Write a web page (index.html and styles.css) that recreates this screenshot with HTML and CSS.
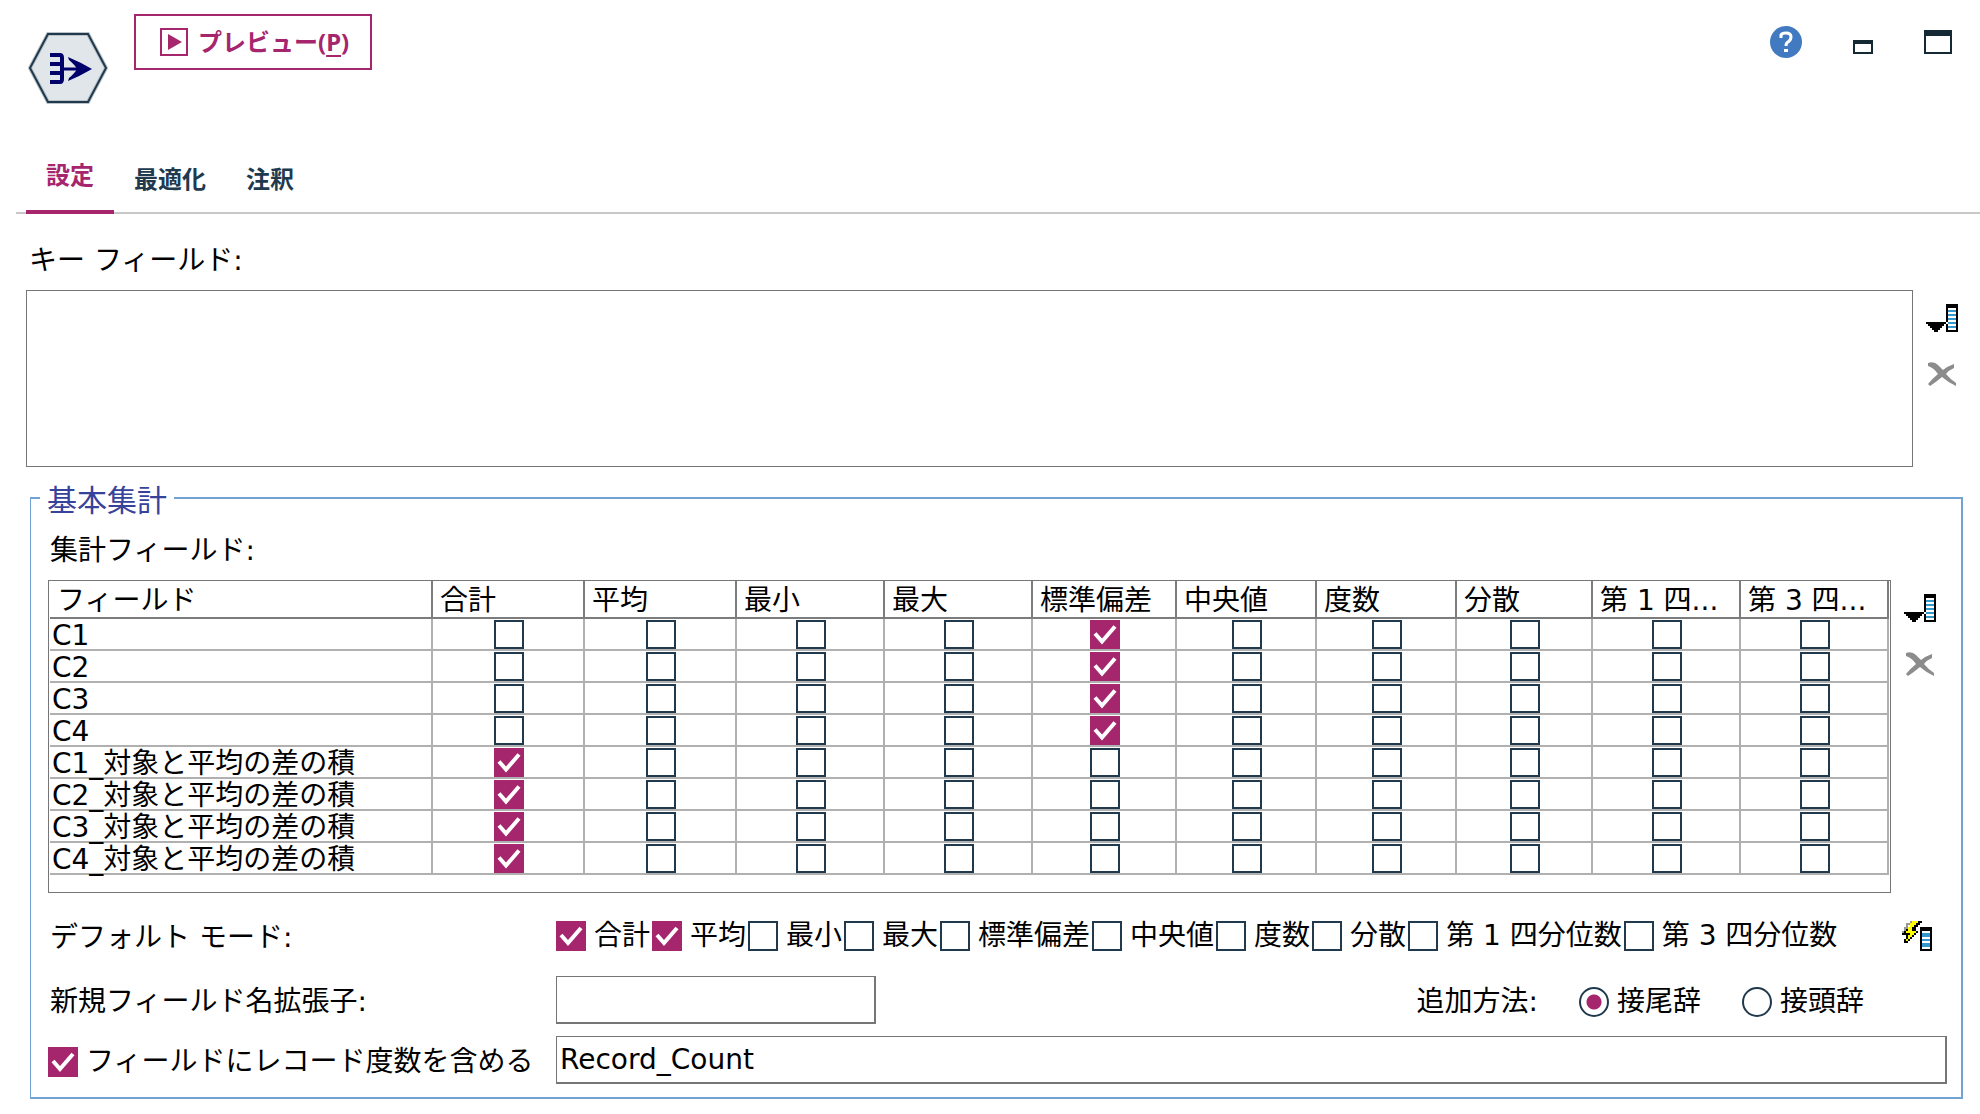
FILE: index.html
```html
<!DOCTYPE html>
<html lang="ja">
<head>
<meta charset="utf-8">
<title>レコード集計</title>
<link rel="stylesheet" href="styles.css">
</head>
<body>
<svg class="defs" aria-hidden="true">
  <symbol id="fields" viewBox="0 0 32 28" shape-rendering="crispEdges">
    <path fill="#000" d="M0 18h20v2h-2v2h-2v2h-2v2h-2v2H8v-2H6v-2H4v-2H2v-2H0zM20 0h12v28H20z"/>
    <path fill="#fff" d="M22 4h8v22h-8zM20 18h2v2h-2z"/>
    <path fill="#3399cc" d="M22 6h8v2h-8zM22 10h8v2h-8zM22 14h8v2h-8zM22 18h8v2h-8zM22 22h8v2h-8z"/>
  </symbol>
  <symbol id="cross" viewBox="0 0 28 24">
    <path fill="#8c8c8c" d="M0 1Q6-1 10 3L15 8Q20 4 26 2V6Q21 8 18 12Q23 18 28 21V24Q21 21 14 15Q8 20 2 24L0 22Q5 16 10 12Q6 6 0 4z"/>
  </symbol>
</svg>
<header class="toolbar">
  <svg class="node" width="80" height="72" viewBox="0 0 80 72">
    <path d="M20 2H60L78 36L60 70H20L2 36Z" fill="#e1e6ea" stroke="#b9c3c9" stroke-width="4"/>
    <path d="M20 2H60L78 36L60 70H20L2 36Z" fill="none" stroke="#20394d" stroke-width="2"/>
    <path d="M22 23H32Q34 23 34 26V47Q34 50 32 50H22M22 32H34M22 41H34" fill="none" stroke="#00006b" stroke-width="4"/>
    <path d="M34 37H50" stroke="#00006b" stroke-width="3"/>
    <path d="M40 25Q52 30 64 37Q52 44 40 49L41 46Q47 41 49 37Q47 33 41 28Z" fill="#00006b"/>
  </svg>
  <button class="preview" type="button">
    <svg width="28" height="28" viewBox="0 0 28 28"><path d="M1 1H27V27H1Z" fill="none" stroke="#a6266e" stroke-width="2"/><path d="M8 6L22 14L8 22Z" fill="#a6266e"/></svg>
    <span>プレビュー(<u>P</u>)</span>
  </button>
  <div class="window-tools">
    <button type="button" aria-label="ヘルプ"><svg width="32" height="32" viewBox="0 0 32 32"><circle cx="16" cy="16" r="16" fill="#427ac1"/><path d="M11 12V9Q12 7 16 7Q21 7 21 11Q21 14 18 16Q16 17 16 20" fill="none" stroke="#fff" stroke-width="3"/><path d="M14 23h4v3h-4z" fill="#fff"/></svg></button>
    <button type="button" aria-label="最小化"><svg class="low" width="20" height="14" viewBox="0 0 20 14"><path d="M0 0H20V14H0ZM2 4V12H18V4Z" fill="#152935" fill-rule="evenodd"/></svg></button>
    <button type="button" aria-label="最大化"><svg width="28" height="24" viewBox="0 0 28 24"><path d="M0 0H28V24H0ZM2 6V22H26V6Z" fill="#152935" fill-rule="evenodd"/></svg></button>
  </div>
</header>
<nav class="tabs">
  <a class="active" href="#settings">設定</a>
  <a href="#optimize">最適化</a>
  <a href="#notes">注釈</a>
</nav>
<main id="settings">
  <label class="key-label" for="keys">キー フィールド:</label>
  <div class="with-tools key-area">
    <select id="keys" class="key-list" size="4"></select>
    <div class="side">
      <button type="button" aria-label="フィールドを選択"><svg width="32" height="28"><use href="#fields"/></svg></button>
      <button type="button" aria-label="削除"><svg width="28" height="24"><use href="#cross"/></svg></button>
    </div>
  </div>
  <fieldset class="group">
    <legend>基本集計</legend>
    <p class="table-label" id="agg">集計フィールド:</p>
    <div class="with-tools">
      <div class="grid-box">
        <table aria-labelledby="agg">
          <colgroup><col class="w383"><col class="w152"><col class="w152"><col class="w148"><col class="w148"><col class="w144"><col class="w140"><col class="w140"><col class="w136"><col class="w148"><col class="w148"></colgroup>
          <thead><tr><th>フィールド</th><th>合計</th><th>平均</th><th>最小</th><th>最大</th><th>標準偏差</th><th>中央値</th><th>度数</th><th>分散</th><th>第 1 四...</th><th>第 3 四...</th></tr></thead>
          <tbody id="rows"></tbody>
        </table>
      </div>
      <div class="side">
        <button type="button" aria-label="フィールドを選択"><svg width="32" height="28"><use href="#fields"/></svg></button>
        <button type="button" aria-label="削除"><svg width="28" height="24"><use href="#cross"/></svg></button>
      </div>
    </div>
    <div class="row modes">
      <span class="name">デフォルト モード:</span>
      <div class="checks">
        <label><input type="checkbox" checked>合計</label>
        <label><input type="checkbox" checked>平均</label>
        <label><input type="checkbox">最小</label>
        <label><input type="checkbox">最大</label>
        <label><input type="checkbox">標準偏差</label>
        <label><input type="checkbox">中央値</label>
        <label><input type="checkbox">度数</label>
        <label><input type="checkbox">分散</label>
        <label><input type="checkbox">第 1 四分位数</label>
        <label><input type="checkbox">第 3 四分位数</label>
      </div>
      <button class="apply" type="button" aria-label="デフォルトを適用"><svg width="30" height="30" viewBox="0 0 30 30" shape-rendering="crispEdges">
        <path fill="#000" d="M18 6h12v24H18z"/><path fill="#fff" d="M20 10h8v18h-8z"/><path fill="#3399cc" d="M20 12h8v4h-8zM20 18h8v2h-8zM20 22h8v4h-8z"/>
        <path fill="#000" d="M16 0h4v2h-2v2h-2v2h-2v4h2v2h-2v2h-2v2h-2v2H8v2H6v2H2v-4h2v-4H0v-2h2v-2h2v-2h2V6h2V4h2V2h6z"/>
        <path fill="#999" d="M8 0h2v2H8v2H6v4H4v2H2v2H0v-2h2V6h2V2h4z"/>
        <path fill="#ff0" d="M10 0h6v2h-2v2h-2v2h-2v4h4v2h-2v2h-2v2H8v2H6v2H4v-2h2v-4h2v-2H4v-2h2V6h2V2h2z"/></svg></button>
    </div>
    <div class="row">
      <label class="name" for="ext">新規フィールド名拡張子:</label>
      <input class="text short" id="ext" type="text">
      <div class="radios" role="radiogroup" aria-labelledby="how">
        <span id="how">追加方法:</span>
        <label><input type="radio" name="how" checked>接尾辞</label>
        <label><input type="radio" name="how">接頭辞</label>
      </div>
    </div>
    <div class="row">
      <label class="name"><input type="checkbox" checked>フィールドにレコード度数を含める</label>
      <input class="text long" type="text" value="Record_Count" aria-label="レコード度数フィールド">
    </div>
  </fieldset>
</main>
<script src="rows.js"></script>
</body>
</html>
```
FILE: rows.js
```js
const columns = ['合計', '平均', '最小', '最大', '標準偏差', '中央値', '度数', '分散', '第 1 四分位数', '第 3 四分位数'];
const plain = ['C1', 'C2', 'C3', 'C4'];
const fields = [
  ...plain.map(name => ({ name, on: '標準偏差' })),
  ...plain.map(name => ({ name: name + '_対象と平均の差の積', on: '合計' }))
];
const body = document.getElementById('rows');
for (const field of fields) {
  const row = body.insertRow();
  row.insertCell().textContent = field.name;
  for (const column of columns) {
    const box = document.createElement('input');
    box.type = 'checkbox';
    box.checked = column === field.on;
    box.setAttribute('aria-label', field.name + ' ' + column);
    row.insertCell().append(box);
  }
}
```
FILE: styles.css
```css
* { box-sizing: border-box; }
body {
  margin: 0;
  background: #fff;
  color: #000;
  font: 28px/32px "DejaVu Sans", "Noto Sans CJK JP", sans-serif;
}
.defs { display: none; }
svg { display: block; }
button { padding: 0; border: 0; background: none; font: inherit; }

.toolbar { display: flex; align-items: flex-start; height: 142px; padding: 14px 28px 0; }
.node { margin: 18px 26px 0 0; }
.preview {
  display: flex;
  align-items: center;
  gap: 10px;
  height: 56px;
  padding: 0 21px 0 24px;
  border: 2px solid #a6266e;
  color: #a6266e;
  font: bold 24px/32px "Noto Sans", "Noto Sans CJK JP", sans-serif;
  white-space: nowrap;
}
.preview u { text-underline-offset: 4px; }
.window-tools { display: flex; align-items: center; gap: 51px; height: 56px; margin-left: auto; }
.low { margin-top: 10px; }

.tabs { display: flex; height: 72px; margin-left: 16px; padding-left: 10px; border-bottom: 2px solid #c8c8c8; }
.tabs a {
  height: 72px;
  padding: 20px 10px;
  color: #20394d;
  font: bold 24px/32px "Noto Sans CJK JP", sans-serif;
  text-decoration: none;
  margin-right: 20px;
}
.tabs .active { padding: 16px 20px; margin-right: 10px; border-bottom: 4px solid #a6266e; color: #a6266e; }

main { padding: 31px 17px 16px 26px; }
.key-label { display: block; margin: 0 0 13px 3px; }
.with-tools { display: flex; align-items: flex-start; gap: 13px; }
.key-area { margin-bottom: 11px; padding-right: 5px; }
.key-list {
  flex: 1;
  height: 177px;
  border: 1px solid #767676;
  border-radius: 0;
  outline: 0;
  background: #fff;
  appearance: none;
}
.side { display: grid; justify-items: center; gap: 30px; padding-top: 14px; }

.group { min-width: 0; margin: 0 0 0 4px; padding: 0 14px 13px 17px; border: 2px solid #73a3d4; border-left-width: 1px; }
.group legend { margin-left: -8px; padding: 6px 7px 0; color: #37429a; font-size: 30px; line-height: 34px; }
.table-label { margin: 17px 0 13px 2px; }
.grid-box { flex: 1; height: 313px; padding: 0 1px; border: 1px solid #767676; }
.group .side { padding-right: 11px; }
table { width: 100%; border-spacing: 0; table-layout: fixed; }
.w383 { width: 383px; }
.w152 { width: 152px; }
.w148 { width: 148px; }
.w144 { width: 144px; }
.w140 { width: 140px; }
.w136 { width: 136px; }
th {
  height: 38px;
  padding: 4px 0 0 7px;
  border: solid #7c7c7c;
  border-width: 0 2px 2px 0;
  font-weight: normal;
  text-align: left;
  white-space: nowrap;
  overflow: hidden;
}
td {
  height: 32px;
  padding: 1px 0 0 2px;
  border: solid #b0b0b0;
  border-width: 0 2px 2px 0;
  line-height: 27px;
  vertical-align: top;
  white-space: nowrap;
}
td:first-child { padding-top: 3px; }

input[type="checkbox"], input[type="radio"] {
  flex: none;
  width: 30px;
  height: 30px;
  margin: 0 8px 0 0;
  border: 2px solid #20394d;
  background: #fff;
  appearance: none;
}
input[type="checkbox"]:checked {
  border-color: #a6266e;
  background: #a6266e url("data:image/svg+xml,%3Csvg xmlns='http://www.w3.org/2000/svg' viewBox='0 0 26 26'%3E%3Cpath d='M3 12L10 20L23 5' fill='none' stroke='%23fff' stroke-width='4'/%3E%3C/svg%3E") center / 26px 26px;
}
td input[type="checkbox"] { display: block; height: 29px; margin: 0 auto; }
input[type="radio"] { border-radius: 50%; }
input[type="radio"]:checked { background: radial-gradient(circle, #a6266e 7px, #fff 8px); }

.row { display: flex; align-items: center; height: 48px; margin-bottom: 12px; }
.modes { margin: 19px 0 16px; }
.name { display: flex; align-items: center; flex: none; width: 508px; padding: 3px 0 0 2px; }
.name:has(input) { padding-left: 0; }
.checks { display: flex; gap: 2px; white-space: nowrap; }
.checks label, .radios label { display: flex; align-items: center; }
.apply { margin: 0 15px 0 auto; }
.text { height: 48px; padding: 0 3px; border: solid #767676; border-width: 1px 2px 2px 1px; background: #fff; font: inherit; }
.short { width: 320px; }
.long { flex: 1; }
.radios { display: flex; align-items: center; gap: 41px; margin: 0 83px 0 auto; padding-top: 3px; }
.row:last-child { margin-bottom: 0; }
```
